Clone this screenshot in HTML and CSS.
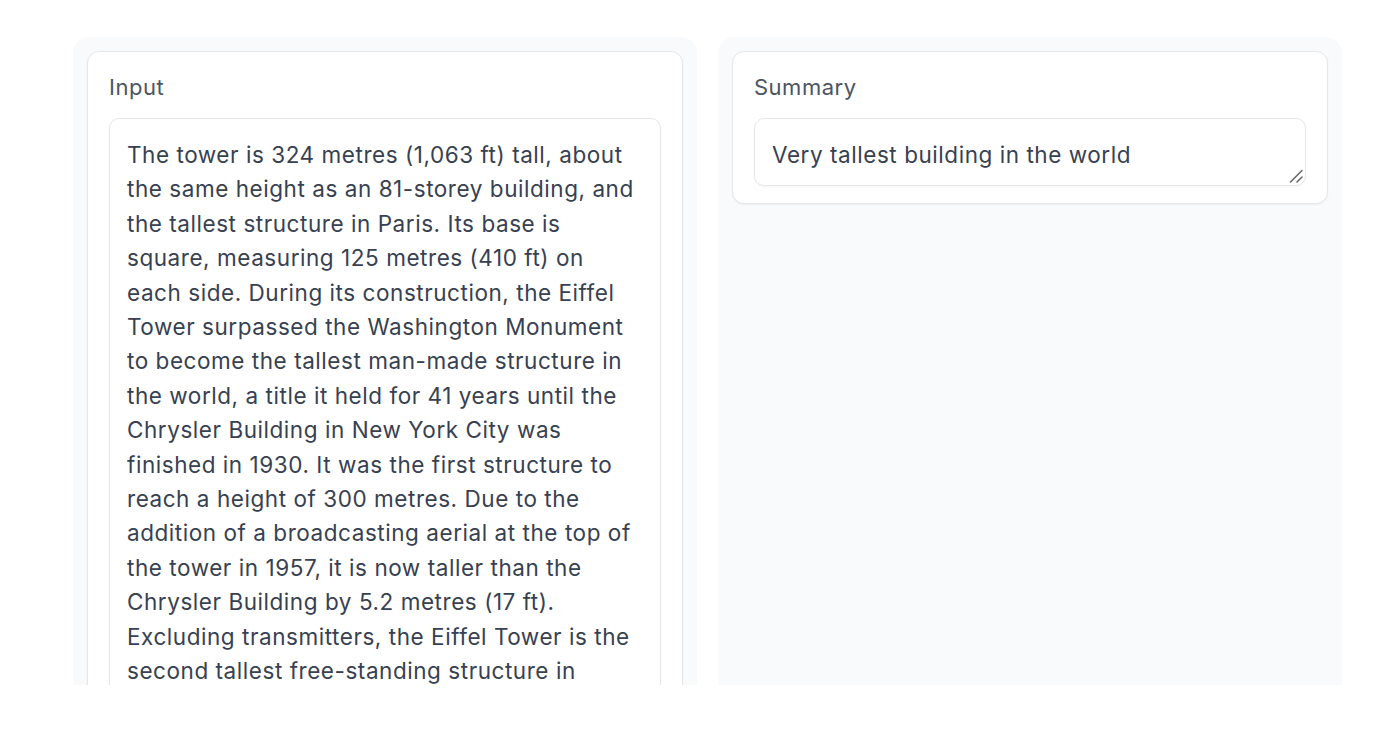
FILE: index.html
```html
<!DOCTYPE html>
<html lang="en">
<head>
<meta charset="utf-8">
<title>Summarizer</title>
<link rel="stylesheet" href="styles.css">
</head>
<body>
<main class="app">
  <div class="row">
    <section class="panel">
      <div class="card">
        <label class="label" for="input">Input</label>
        <textarea id="input" class="field field-input" spellcheck="false">The tower is 324 metres (1,063 ft) tall, about the same height as an 81-storey building, and the tallest structure in Paris. Its base is square, measuring 125 metres (410 ft) on each side. During its construction, the Eiffel Tower surpassed the Washington Monument to become the tallest man-made structure in the world, a title it held for 41 years until the Chrysler Building in New York City was finished in 1930. It was the first structure to reach a height of 300 metres. Due to the addition of a broadcasting aerial at the top of the tower in 1957, it is now taller than the Chrysler Building by 5.2 metres (17 ft). Excluding transmitters, the Eiffel Tower is the second tallest free-standing structure in France after the Millau Viaduct.</textarea>
      </div>
    </section>
    <section class="panel">
      <div class="card">
        <label class="label" for="summary">Summary</label>
        <div class="field-wrap">
          <textarea id="summary" class="field field-summary" spellcheck="false">Very tallest building in the world</textarea>
          <svg class="resizer" width="14" height="14" viewBox="0 0 14 14" aria-hidden="true">
            <path d="M1.5 13 L13 1.5" stroke="#6b6b6b" stroke-width="1.6" stroke-linecap="round"/>
            <path d="M8 13 L13 8" stroke="#6b6b6b" stroke-width="1.6" stroke-linecap="round"/>
          </svg>
        </div>
      </div>
    </section>
  </div>
</main>
</body>
</html>
```
FILE: styles.css
```css
html, body {
  margin: 0;
  padding: 0;
  background: #ffffff;
}
body {
  font-family: Inter, "Noto Sans", "Liberation Sans", sans-serif;
  color: #374151;
}
.app {
  height: 685px;
  overflow: hidden;
  box-sizing: border-box;
  padding: 37px 58px 0 73px;
}
.row {
  display: grid;
  grid-template-columns: 1fr 1fr;
  gap: 21px;
  align-items: start;
}
.panel {
  background: #f9fafb;
  border-radius: 16px;
  padding: 14px;
  height: 900px;
  box-sizing: border-box;
}
.card {
  background: #ffffff;
  border: 1px solid #e5e7eb;
  border-radius: 12px;
  padding: 20px 21px 17px;
  box-shadow: 0 1px 2px rgba(0, 0, 0, 0.05);
  display: flex;
  flex-direction: column;
  gap: 16px;
}
.label {
  font-size: 22px;
  line-height: 30px;
  letter-spacing: 0.5px;
  color: #4b5563;
}
.field-wrap {
  position: relative;
}
.field {
  display: block;
  width: 100%;
  box-sizing: border-box;
  margin: 0;
  font-family: inherit;
  font-size: 22.5px;
  letter-spacing: 0.55px;
  line-height: 34.4px;
  color: #374151;
  background: #ffffff;
  border: 1px solid #e5e7eb;
  border-radius: 10px;
  padding: 19px 22px 13px 17px;
  box-shadow: 0 1px 2px rgba(0, 0, 0, 0.04);
  outline: none;
  overflow: hidden;
  resize: none;
}
.field-input {
  height: 700px;
}
.field-summary {
  height: 68px;
}
.resizer {
  position: absolute;
  right: 3px;
  bottom: 3px;
}
```
